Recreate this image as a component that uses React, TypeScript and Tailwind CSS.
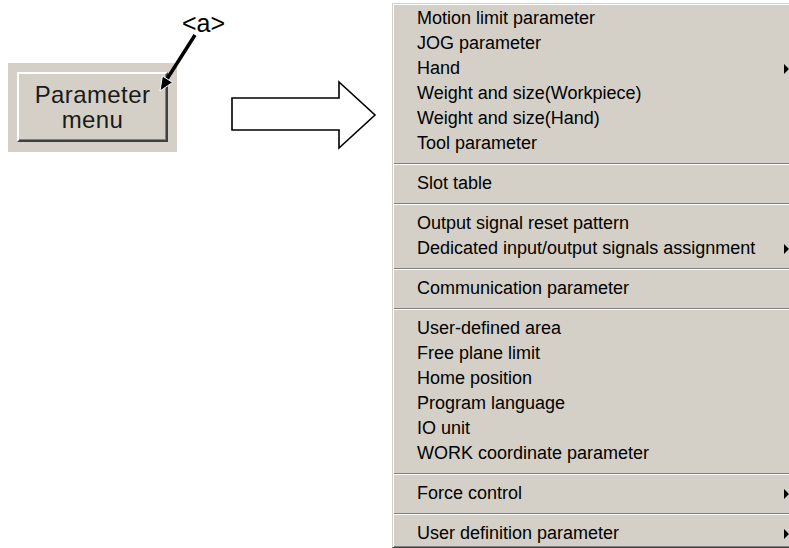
import React from 'react';

type Item = { label: string; sub?: boolean } | 'sep';

const menuItems: Item[] = [
  { label: 'Motion limit parameter' },
  { label: 'JOG parameter' },
  { label: 'Hand', sub: true },
  { label: 'Weight and size(Workpiece)' },
  { label: 'Weight and size(Hand)' },
  { label: 'Tool parameter' },
  'sep',
  { label: 'Slot table' },
  'sep',
  { label: 'Output signal reset pattern' },
  { label: 'Dedicated input/output signals assignment', sub: true },
  'sep',
  { label: 'Communication parameter' },
  'sep',
  { label: 'User-defined area' },
  { label: 'Free plane limit' },
  { label: 'Home position' },
  { label: 'Program language' },
  { label: 'IO unit' },
  { label: 'WORK coordinate parameter' },
  'sep',
  { label: 'Force control', sub: true },
  'sep',
  { label: 'User definition parameter', sub: true },
];

const App = () => {
  return (
    <div className="w-[789px] h-[548px] overflow-hidden bg-white flex font-['Liberation_Sans',Arial,sans-serif] text-black">
      {/* Left: button with callout */}
      <div className="relative w-[392px] shrink-0">
        <div className="pt-[63px] pl-[8px]">
          <div className="w-[169px] h-[89px] bg-[#d4d0c8] pt-[9px] pl-[9px]">
            <div className="w-[151px] h-[70px] border-t-2 border-l-2 border-t-white border-l-white border-b-2 border-r-2 border-b-[#404040] border-r-[#404040] shadow-[inset_-1px_-1px_0_#808080] flex flex-col items-center justify-center text-[24px] leading-[25px] tracking-[0.4px] text-[#1a1a1a]">
              <span>Parameter</span>
              <span>menu</span>
            </div>
          </div>
        </div>

        <span className="absolute left-[182px] top-[8px] text-[25px] leading-[30px]">&lt;a&gt;</span>

        <svg className="absolute left-0 top-0" width="392" height="200" viewBox="0 0 392 200">
          <line x1="195" y1="35" x2="167" y2="79" stroke="black" strokeWidth="3.5" />
          <polygon points="160,91 172.6,82.4 162.4,76" fill="black" stroke="white" strokeWidth="1" />
          <polygon
            points="232,98 339,98 339,82 375,115 339,148 339,130 232,130"
            fill="white"
            stroke="black"
            strokeWidth="1.6"
            strokeLinejoin="miter"
          />
        </svg>
      </div>

      {/* Right: popup menu */}
      <div className="mt-[3px] w-[410px] h-[545px] shrink-0 bg-[#d4d0c8] border-t border-l border-t-[#d4d0c8] border-l-[#d4d0c8] border-b border-b-[#404040] shadow-[inset_1px_1px_0_#ffffff,inset_0_-1px_0_#808080] pt-[2px] flex flex-col">
        {menuItems.map((item, idx) =>
          item === 'sep' ? (
            <div key={idx} className="h-[15px] flex items-center pl-[1px]">
              <div className="w-full h-[2px] border-t border-t-[#808080] border-b border-b-white" />
            </div>
          ) : (
            <div key={idx} className="h-[25px] flex items-center pl-[24px] pr-[13px] text-[18px] leading-[25px]">
              <span className="whitespace-nowrap">{item.label}</span>
              {item.sub && (
                <span className="ml-auto w-0 h-0 border-y-[5px] border-y-transparent border-l-[5px] border-l-black" />
              )}
            </div>
          )
        )}
      </div>
    </div>
  );
};

export default App;
